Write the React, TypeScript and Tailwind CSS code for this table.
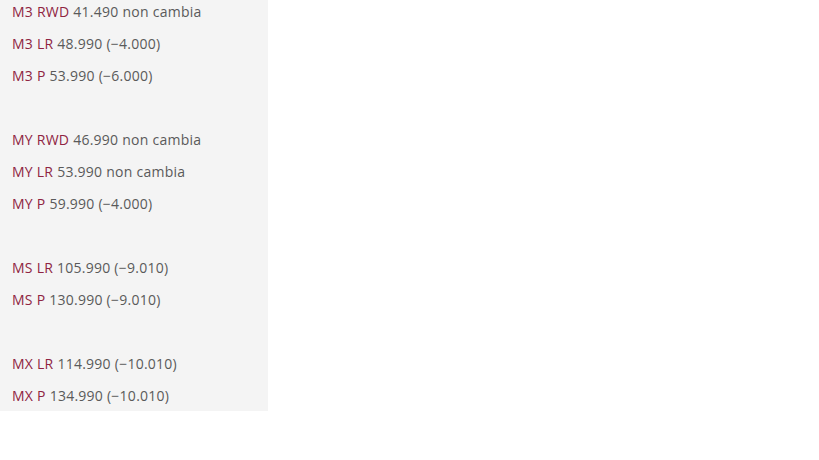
const groups: [string, string][][] = [
  [
    ["M3 RWD", "41.490 non cambia"],
    ["M3 LR", "48.990 (−4.000)"],
    ["M3 P", "53.990 (−6.000)"],
  ],
  [
    ["MY RWD", "46.990 non cambia"],
    ["MY LR", "53.990 non cambia"],
    ["MY P", "59.990 (−4.000)"],
  ],
  [
    ["MS LR", "105.990 (−9.010)"],
    ["MS P", "130.990 (−9.010)"],
  ],
  [
    ["MX LR", "114.990 (−10.010)"],
    ["MX P", "134.990 (−10.010)"],
  ],
];

export default function App() {
  return (
    <div className="min-h-[460px] bg-white">
      <div
        className="flex w-[268px] flex-col gap-10 bg-[#f4f4f4] pl-3 pb-[3px] text-[14px] tracking-[0.25px] text-[#5a5a5a]"
        style={{ fontFamily: '"Open Sans", "Noto Sans", sans-serif' }}
      >
        {groups.map((group, gi) => (
          <div key={gi} className="flex flex-col gap-2">
            {group.map(([model, price]) => (
              <p key={model} className="h-6 leading-6">
                <span className="text-[#8f2442]">{model}</span> {price}
              </p>
            ))}
          </div>
        ))}
      </div>
    </div>
  );
}
